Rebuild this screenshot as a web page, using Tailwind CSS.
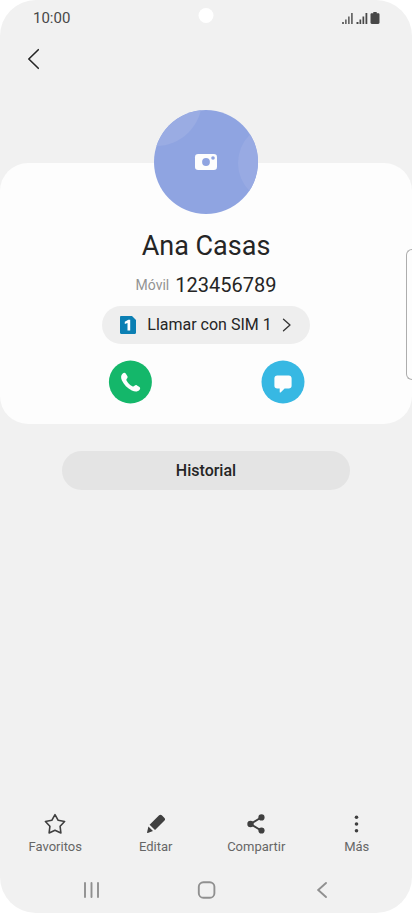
<!DOCTYPE html>
<html lang="es">

<head>
    <meta charset="UTF-8">
    <meta name="viewport" content="width=device-width, initial-scale=1.0">
    <script src="https://cdn.jsdelivr.net/npm/@tailwindcss/browser@4"></script>
    <title>Ana Casas - Contacto</title>
</head>

<body class="bg-white font-['Roboto',sans-serif] text-[#252525]">

    <div class="relative flex min-h-[calc(100vh-2px)] flex-col overflow-hidden rounded-[36px] bg-[#f1f1f1]">

        <!-- Status bar -->
        <div class="relative flex h-9 items-center justify-between pr-8 pl-[33px] text-[15px] text-[#484848]">
            <span>10:00</span>
            <span class="absolute top-2 left-1/2 h-[15px] w-[15px] -translate-x-1/2 rounded-full bg-white"></span>
            <svg class="h-3 w-[38px]" viewBox="0 0 38 12" fill="#484848">
                <path d="M0 10h2v2H0zM3 7.500h1.700V12H3zM6 4.500h1.700V12H6zM9 1h1.800v11H9z" opacity=".8" />
                <path d="M14.500 10h2v2h-2zM17.500 7.500h1.700V12h-1.700zM20.500 4.500h1.700V12h-1.700zM23.500 1h1.800v11h-1.800z" />
                <path d="M31.300 0h3.400v1.200h1.600c.7 0 1.200.5 1.200 1.200v8.200c0 .8-.5 1.400-1.300 1.400h-6.400c-.8 0-1.300-.6-1.300-1.400V2.400c0-.7.5-1.200 1.200-1.200h1.600z" />
            </svg>
        </div>

        <header class="px-6 pt-3">
            <button type="button" aria-label="Volver" class="block p-0">
                <svg class="h-[22px] w-5" viewBox="0 0 20 22" fill="none" stroke="#252525" stroke-width="1.6"
                    stroke-linecap="round" stroke-linejoin="round">
                    <path d="M14.300 1.700 4.800 11l9.500 9.300" />
                </svg>
            </button>
        </header>

        <main class="mt-[93px] flex-1">
            <!-- Contact card -->
            <section class="flex flex-col items-center rounded-[28px] bg-[#fdfdfd] pb-5">
                <button type="button" aria-label="Cambiar foto" class="-mt-[53px] block h-[104px] w-[104px] overflow-hidden rounded-full">
                    <svg class="h-full w-full" viewBox="0 0 104 104">
                        <rect width="104" height="104" fill="#8fa4e1" />
                        <circle cx="2" cy="-10" r="46" fill="#9aace3" />
                        <circle cx="124" cy="53" r="40" fill="#98aae3" />
                        <rect x="41" y="44" width="22" height="16" rx="3.2" fill="#fdfdfd" />
                        <circle cx="52" cy="52" r="3.9" fill="#8fa4e1" />
                        <circle cx="59" cy="48" r="1.8" fill="#8fa4e1" />
                    </svg>
                </button>

                <h1 class="mt-4 text-[27px] leading-8">Ana Casas</h1>
                <p class="mt-[9px] flex items-center gap-1.5 text-[20px] leading-7">
                    <span class="text-sm text-[#939393]">Móvil</span>
                    <span>123456789</span>
                </p>

                <button type="button" class="mt-[7px] flex h-[38px] items-center rounded-full bg-[#eeeeee] px-[18px] text-base">
                    <svg class="mr-[11px] h-[18px] w-4" viewBox="0 0 16 18">
                        <path d="M1.200 0H12l4 4v12.800c0 .7-.5 1.200-1.200 1.200H1.200C.5 18 0 17.500 0 16.800V1.200C0 .5.5 0 1.200 0z" fill="#0b7fb3" />
                        <path d="M8.300 3.800h1.900v10.700H7.500V7.100l-2.700.9V5.700z" fill="#fff" />
                    </svg>
                    <span>Llamar con SIM 1</span>
                    <svg class="ml-2.5 h-3.5 w-2.5" viewBox="0 0 10 14" fill="none" stroke="#333" stroke-width="1.300"
                        stroke-linecap="round" stroke-linejoin="round">
                        <path d="M1.500 1.200 8 7l-6.500 5.800" />
                    </svg>
                </button>

                <div class="mt-4 flex w-full justify-center gap-[109px]">
                    <button type="button" aria-label="Llamar" class="flex h-11 w-11 items-center justify-center">
                        <svg class="h-11 w-11" viewBox="0 0 44 44">
                            <circle cx="22.400" cy="22" r="21.500" fill="#14b76a" />
                            <path d="M14.500 13.700c1-.9 2.300-1.300 3.200-.3l1.600 2.500c.6.900.3 1.800-.3 2.500-.7.700-.8 1.400-.3 2.300 1.400 2.500 3.100 4.200 5.600 5.500.9.500 1.500.3 2.200-.4.700-.7 1.600-.9 2.500-.4l2.500 1.600c1 .8.800 2.100-.1 3-1.700 1.800-4.300 2-7.600.4-4.300-2.100-8.100-5.900-10-10.200-1.100-2.700-.9-4.900.7-6.500z" fill="#fdfdfd" />
                        </svg>
                    </button>
                    <button type="button" aria-label="Mensaje" class="flex h-11 w-11 items-center justify-center">
                        <svg class="h-11 w-11" viewBox="0 0 44 44">
                            <circle cx="22" cy="22" r="21.500" fill="#37b8e3" />
                            <path d="M16.200 15.500h11.600c1.700 0 2.800 1.100 2.800 2.800v7.500c0 1.700-1.100 2.800-2.800 2.800h-4.200l-4 3.800c-.4.400-.9.200-.9-.4v-3.400h-2.500c-1.700 0-2.800-1.100-2.800-2.800v-7.500c0-1.700 1.100-2.800 2.800-2.800z" fill="#fdfdfd" />
                        </svg>
                    </button>
                </div>
            </section>

            <div class="mt-[27px] px-[62px]">
                <button type="button" class="h-[39px] w-full rounded-full bg-[#e4e4e4] text-base font-medium">Historial</button>
            </div>
        </main>

        <!-- Contact actions -->
        <nav class="grid grid-cols-4 px-[5px] text-[13px] leading-4 text-[#666]">
            <button type="button" class="flex flex-col items-center gap-[3px]">
                <svg class="h-6 w-6" viewBox="0 0 24 24" fill="none" stroke="#404040" stroke-width="1.600" stroke-linejoin="round">
                    <path d="M12 2.600 15.200 8.300 21.600 9.500 17.100 14.300 17.900 21 12 18.300 6.100 21 6.900 14.300 2.400 9.500 8.800 8.300z" />
                </svg>
                Favoritos
            </button>
            <button type="button" class="flex flex-col items-center gap-[3px]">
                <svg class="h-6 w-6" viewBox="0 0 24 24" fill="#404040">
                    <path d="M15.100 3.300c.8-.8 1.900-.8 2.700 0l2.700 2.600c.8.800.8 1.900 0 2.700l-9.500 9.400-5.400-5.300zM4.400 14.600l4.600 4.500-5.200 1.900c-.6.200-.9-.2-.7-.8z" />
                </svg>
                Editar
            </button>
            <button type="button" class="flex flex-col items-center gap-[3px]">
                <svg class="h-6 w-6" viewBox="0 0 24 24" fill="#404040">
                    <path d="M17.500 5.200 6.500 12l11 6.700" fill="none" stroke="#404040" stroke-width="1.900" />
                    <circle cx="17.500" cy="5.400" r="3.100" />
                    <circle cx="6.500" cy="12" r="3.200" />
                    <circle cx="17.500" cy="18.500" r="3.100" />
                </svg>
                Compartir
            </button>
            <button type="button" class="flex flex-col items-center gap-[3px]">
                <svg class="h-6 w-6" viewBox="0 0 24 24" fill="#404040">
                    <circle cx="11.500" cy="5.300" r="1.800" />
                    <circle cx="11.500" cy="12" r="1.800" />
                    <circle cx="11.500" cy="18.700" r="1.800" />
                </svg>
                Más
            </button>
        </nav>

        <!-- System navigation -->
        <nav class="mt-[23px] grid grid-cols-3 justify-items-center px-8 pb-[11px]">
            <button type="button" aria-label="Recientes">
                <svg class="h-6 w-6" viewBox="0 0 24 24" stroke="#909090" stroke-width="1.900" stroke-linecap="round">
                    <path d="M7 5v14M13.500 5v14M20 5v14" />
                </svg>
            </button>
            <button type="button" aria-label="Inicio">
                <svg class="h-6 w-6" viewBox="0 0 24 24" fill="none" stroke="#909090" stroke-width="1.900">
                    <rect x="4.800" y="4.200" width="15.600" height="15.600" rx="4.600" />
                </svg>
            </button>
            <button type="button" aria-label="Atrás">
                <svg class="h-6 w-6" viewBox="0 0 24 24" fill="none" stroke="#909090" stroke-width="1.900" stroke-linecap="round">
                    <path d="M16 5 8.200 12l7.800 7" />
                </svg>
            </button>
        </nav>

        <!-- Edge panel handle -->
        <div class="absolute top-[249px] right-0 h-[131px] w-1.5 rounded-l-md border border-r-0 border-[#adadad] bg-[#fdfdfd]"></div>
    </div>

</body>

</html>
